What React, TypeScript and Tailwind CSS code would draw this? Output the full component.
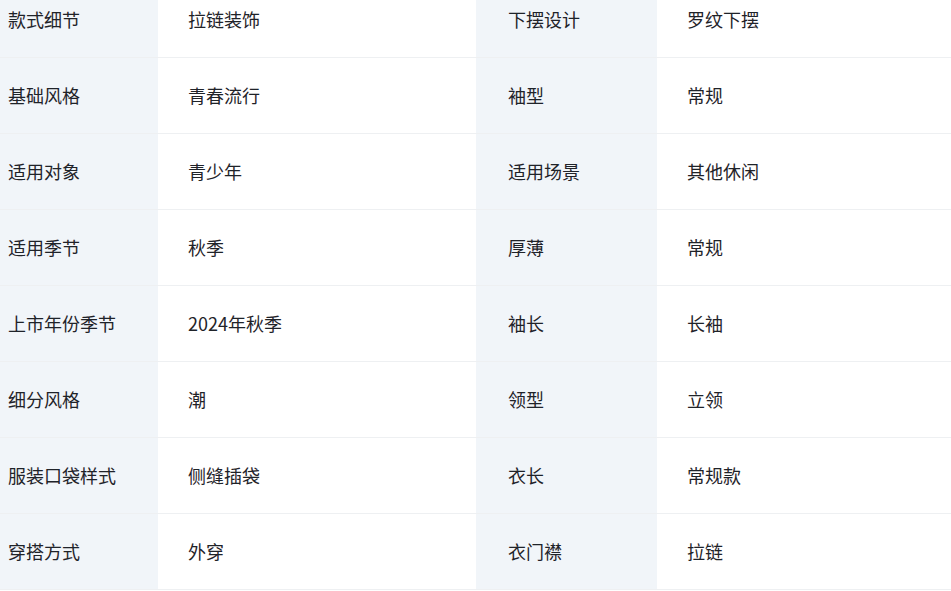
const rows: [string, string, string, string][] = [
  ['款式细节', '拉链装饰', '下摆设计', '罗纹下摆'],
  ['基础风格', '青春流行', '袖型', '常规'],
  ['适用对象', '青少年', '适用场景', '其他休闲'],
  ['适用季节', '秋季', '厚薄', '常规'],
  ['上市年份季节', '2024年秋季', '袖长', '长袖'],
  ['细分风格', '潮', '领型', '立领'],
  ['服装口袋样式', '侧缝插袋', '衣长', '常规款'],
  ['穿搭方式', '外穿', '衣门襟', '拉链'],
];

export default function App() {
  return (
    <div className="h-[591px] w-[951px] overflow-hidden bg-white">
      <div
        className="-ml-[24px] -mt-[18px] w-[975px] text-[18px] text-[#1f2329]"
        style={{ fontFamily: '"Noto Sans CJK SC", "Noto Sans", sans-serif' }}
      >
        {rows.map(([l1, v1, l2, v2]) => (
          <div key={l1} className="grid h-[76px] grid-cols-[182px_318px_181px_1fr] border-b border-[#eef0f2]">
            <div className="flex items-center bg-[#f1f5f9] pl-[32px]">{l1}</div>
            <div className="flex items-center pl-[30px]">{v1}</div>
            <div className="flex items-center bg-[#f1f5f9] pl-[32px]">{l2}</div>
            <div className="flex items-center pl-[30px]">{v2}</div>
          </div>
        ))}
      </div>
    </div>
  );
}
